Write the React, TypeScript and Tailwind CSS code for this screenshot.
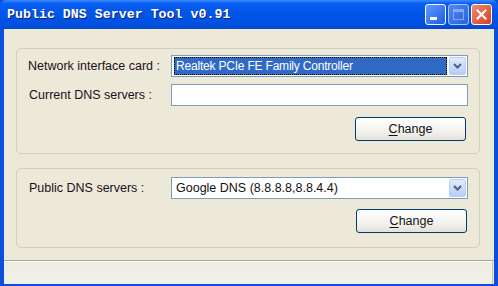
import React from "react";

const font = "font-['Liberation_Sans',Arial,sans-serif]";

function ComboArrow() {
  return (
    <div className="w-[17px] h-[18px] rounded-[2px] border border-[#B9CDF5] bg-[linear-gradient(to_bottom,#E2EBFE,#B7CCF8)] flex items-center justify-center">
      <svg width="9" height="6" viewBox="0 0 9 6">
        <path d="M1 1 L4.5 4.5 L8 1" fill="none" stroke="#4D6185" strokeWidth="2" />
      </svg>
    </div>
  );
}

function XPButton() {
  return (
    <button className={`w-[111px] h-[24px] rounded-[3px] border border-[#003C74] bg-[linear-gradient(to_bottom,#FFFFFF,#F3F2EE_60%,#E3E1D8)] text-[12.5px] text-[#111] ${font} flex items-center justify-center`}>
      <span>
        <span className="underline underline-offset-2">C</span>hange
      </span>
    </button>
  );
}

export default function App() {
  return (
    <div className="w-[498px] h-[286px] flex flex-col bg-[#0B4FDD] overflow-hidden">
      {/* title bar */}
      <div className="h-[29px] shrink-0 flex items-center pl-[7px] pr-[6px] bg-[linear-gradient(to_bottom,#3A8CFF_0%,#0A5EF2_12%,#0055E8_50%,#0050E0_85%,#0349CF_100%)] rounded-t-[6px]">
        <div className="flex-1 text-white font-bold text-[13.3px] font-['Liberation_Mono',monospace] [text-shadow:1px_1px_0_#0A1F7A]">
          Public DNS Server Tool v0.91
        </div>
        <div className="flex gap-[2px] items-center">
          <div className="w-[21px] h-[21px] rounded-[3px] border border-white bg-[linear-gradient(135deg,#5E9BFF,#1E5BE6)] relative">
            <div className="absolute left-[4px] bottom-[4px] w-[7px] h-[3px] bg-white" />
          </div>
          <div className="w-[21px] h-[21px] rounded-[3px] border border-[#A9C4F5] bg-[linear-gradient(135deg,#4D88F5,#2A62E0)] relative">
            <div className="absolute left-[4px] top-[4px] w-[11px] h-[11px] border border-[#86A8EE] border-t-[3px]" />
          </div>
          <div className="w-[21px] h-[21px] rounded-[3px] border border-white bg-[linear-gradient(135deg,#F08A6C,#D9401E)] flex items-center justify-center">
            <svg width="11" height="11" viewBox="0 0 11 11">
              <path d="M1.5 1.5 L9.5 9.5 M9.5 1.5 L1.5 9.5" stroke="white" strokeWidth="2.2" strokeLinecap="square" />
            </svg>
          </div>
        </div>
      </div>
      {/* client */}
      <div className="flex-1 flex flex-col ml-[4px] mr-[4px] mb-[3px] bg-[#ECE9D8]">
        <div className="flex-1 flex flex-col pl-[12px] pr-[14px] pt-[19px]">
          {/* group 1 */}
          <div className="h-[106px] rounded-[5px] border border-[#D0D0BF] flex flex-col pl-[11px] pr-[11px] pt-[6px]">
            <div className="flex items-center h-[22px]">
              <div className={`w-[143px] text-[12.5px] text-[#1a1020] ${font}`}>Network interface card :</div>
              <div className="flex-1 h-[22px] border border-[#7F9DB9] bg-white flex items-center pl-[2px] pr-[1px] gap-[2px]">
                <div className="flex-1 h-[18px] bg-[#316AC5] outline-1 outline-dotted outline-[#000] -outline-offset-1 flex items-center pl-[2px]">
                  <span className={`text-white text-[12px] tracking-[-0.2px] ${font}`}>Realtek PCIe FE Family Controller</span>
                </div>
                <ComboArrow />
              </div>
            </div>
            <div className="flex items-center h-[22px] mt-[7px]">
              <div className={`w-[143px] text-[12.5px] text-[#1a1020] pl-[1px] ${font}`}>Current DNS servers :</div>
              <div className="flex-1 h-[22px] border border-[#7F9DB9] bg-white" />
            </div>
            <div className="flex justify-end mt-[11px] pr-[2px]">
              <XPButton />
            </div>
          </div>
          {/* group 2 */}
          <div className="mt-[14px] h-[80px] rounded-[5px] border border-[#D0D0BF] flex flex-col pl-[11px] pr-[11px] pt-[8px]">
            <div className="flex items-center h-[22px]">
              <div className={`w-[143px] text-[12.5px] text-[#1a1020] pl-[1px] ${font}`}>Public DNS servers :</div>
              <div className="flex-1 h-[22px] border border-[#7F9DB9] bg-white flex items-center pl-[2px] pr-[1px] gap-[2px]">
                <div className="flex-1 h-[18px] flex items-center pl-[2px]">
                  <span className={`text-[#111] text-[12.5px] ${font}`}>Google DNS (8.8.8.8,8.8.4.4)</span>
                </div>
                <ComboArrow />
              </div>
            </div>
            <div className="flex justify-end mt-[10px] pr-[1px]">
              <XPButton />
            </div>
          </div>
        </div>
        {/* status bar */}
        <div className="h-[24px] mt-[12px] shrink-0 border-t border-[#A7A697] flex">
          <div className="flex-1 border-t border-white bg-[linear-gradient(to_bottom,#EFEDE3,#F2F0E8)] border-r border-r-[#C9C7BA]" />
          <div className="w-[1px]" />
        </div>
      </div>
    </div>
  );
}
